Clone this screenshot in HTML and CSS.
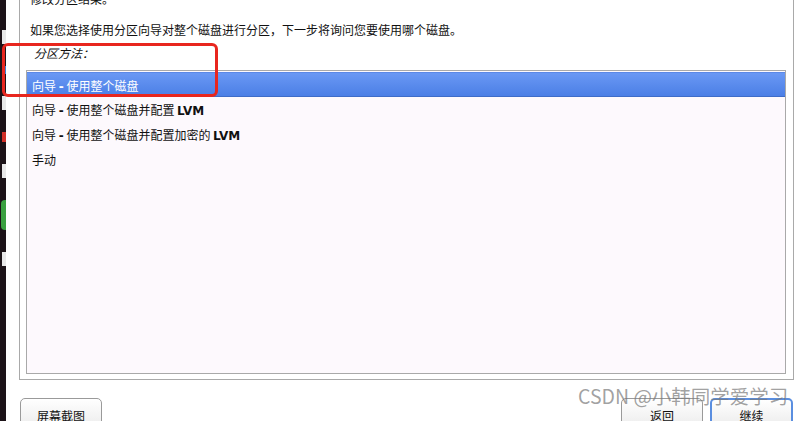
FILE: index.html
```html
<!DOCTYPE html>
<html lang="zh-CN">
  <head>
    <meta charset="UTF-8" />
    <title>分区磁盘</title>
    <link rel="stylesheet" href="styles.css">
  </head>
  <body>
    <div class="strip">
      <span class="dot white"></span>
      <span class="dot blue"></span>
      <span class="dot white"></span>
      <span class="dot red"></span>
      <span class="dot white"></span>
      <span class="dot green"></span>
      <span class="dot white"></span>
    </div>

    <div class="screen">
      <div class="frame">
        <p class="note">修改分区结果。</p>
        <p class="desc">如果您选择使用分区向导对整个磁盘进行分区，下一步将询问您要使用哪个磁盘。</p>
        <p class="label">分区方法：</p>
        <ul class="list">
          <li class="active">向导 <b>-</b> 使用整个磁盘</li>
          <li>向导 <b>-</b> 使用整个磁盘并配置 <b>LVM</b></li>
          <li>向导 <b>-</b> 使用整个磁盘并配置加密的 <b>LVM</b></li>
          <li>手动</li>
        </ul>
      </div>

      <div class="buttons">
        <button class="btn">屏幕截图</button>
        <div class="right">
          <button class="btn">返回</button>
          <button class="btn primary">继续</button>
        </div>
      </div>
    </div>

    <!-- 标注 -->
    <div class="mark"></div>
    <div class="watermark">CSDN @小韩同学爱学习</div>
  </body>
</html>
```

FILE: styles.css
```css
* {
  box-sizing: border-box;
}
body {
  margin: 0;
  height: 421px;
  overflow: hidden;
  display: flex;
  background: #fff;
  font-family: "Noto Sans CJK SC", "DejaVu Sans", sans-serif;
  font-size: 12px;
  color: #111;
}
.strip {
  width: 6px;
  flex: none;
  background: #1c1318;
  display: flex;
  flex-direction: column;
  align-items: flex-end;
  gap: 22px;
  padding-top: 30px;
}
.dot {
  width: 4px;
  height: 14px;
}
.dot.white {
  background: #e8e8e8;
}
.dot.blue {
  background: #3a7fd0;
  height: 8px;
}
.dot.red {
  background: #d03028;
  height: 10px;
}
.dot.green {
  background: #3aa040;
  height: 30px;
  width: 5px;
  border-radius: 4px 0 0 4px;
}

.screen {
  flex: 1;
  padding: 0 8px 0 13px;
  display: flex;
  flex-direction: column;
}
.frame {
  height: 380px;
  flex: none;
  border: 1px solid #a9a9a9;
  border-top: none;
  padding: 0 7px 5px 6px;
  display: flex;
  flex-direction: column;
}
.frame p {
  margin: 0;
  line-height: 18px;
  white-space: nowrap;
}
.note {
  margin-top: -10px !important;
  padding-left: 4px;
}
.desc {
  margin-top: 13px !important;
  padding-left: 4px;
}
.label {
  margin-top: 5px !important;
  padding-left: 8px;
  font-style: italic;
}
.list {
  flex: 1;
  margin: 8px 0 0;
  padding: 1px 0 0;
  list-style: none;
  border: 1px solid #a9a9a9;
  background: #fdf9fd;
}
.list li {
  height: 25px;
  line-height: 25px;
  padding-left: 5px;
}
.list li b {
  font-family: "DejaVu Sans", sans-serif;
  font-weight: bold;
}
.list li.active {
  color: #fff;
  background: linear-gradient(#6a98f4, #4b7fe6);
  border-bottom: 1px solid #3e6cc8;
  border-top: 1px solid #5b88e6;
}

.buttons {
  display: flex;
  justify-content: space-between;
  padding: 18px 1px 0 1px;
}
.right {
  display: flex;
  gap: 7px;
}
.btn {
  width: 83px;
  height: 30px;
  font-family: inherit;
  font-size: 12px;
  color: #111;
  border: 1px solid #9a9a9a;
  border-radius: 5px 5px 0 0;
  background: linear-gradient(#ffffff, #ececec);
  padding: 4px 0 0;
  vertical-align: top;
}
.btn:first-child {
  width: 82px;
}
.btn.primary {
  border: 2px solid #5a8ee0;
}

.mark {
  position: absolute;
  left: 2px;
  top: 43px;
  width: 216px;
  height: 54px;
  border: 3px solid #e8261e;
  border-radius: 6px;
}
.watermark {
  position: absolute;
  left: 578px;
  top: 382px;
  font-family: "Noto Sans CJK SC", sans-serif;
  font-size: 19.5px;
  line-height: 28px;
  color: rgba(120, 120, 120, 0.7);
  white-space: nowrap;
}
```
